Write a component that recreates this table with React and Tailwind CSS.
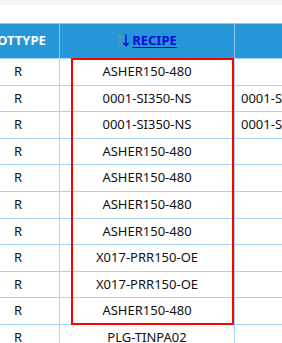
import React from 'react';

const rows = [
  { type: 'R', recipe: 'ASHER150-480', next: '' },
  { type: 'R', recipe: '0001-SI350-NS', next: '0001-SI350-NS' },
  { type: 'R', recipe: '0001-SI350-NS', next: '0001-SI350-NS' },
  { type: 'R', recipe: 'ASHER150-480', next: '' },
  { type: 'R', recipe: 'ASHER150-480', next: '' },
  { type: 'R', recipe: 'ASHER150-480', next: '' },
  { type: 'R', recipe: 'ASHER150-480', next: '' },
  { type: 'R', recipe: 'X017-PRR150-OE', next: '' },
  { type: 'R', recipe: 'X017-PRR150-OE', next: '' },
  { type: 'R', recipe: 'ASHER150-480', next: '' },
  { type: 'R', recipe: 'PLG-TINPA02', next: '' },
];

function SortArrows() {
  return (
    <svg width="12" height="13" viewBox="0 0 12 13" className="inline-block mr-[3px] -mt-[2px] align-middle">
      <g fill="none" strokeWidth="1.3" strokeLinecap="round" strokeLinejoin="round">
        <path d="M3 12V1.5M0.8 3.8L3 1.3L5.2 3.8" stroke="#7d8b98" />
        <path d="M9 1V11.5M6.8 9.2L9 11.7L11.2 9.2" stroke="#0a0ad6" />
      </g>
    </svg>
  );
}

export default function App() {
  return (
    <div
      className="relative w-[282px] h-[343px] overflow-hidden bg-white text-[#111]"
      style={{ fontFamily: '"Noto Sans", "Open Sans", sans-serif' }}
    >
      <div className="h-[5px] bg-[#f4f5f7]" />
      <div className="h-[18px]" />

      {/* table */}
      <div className="-ml-[23px] w-[400px]">
        <div className="flex h-[35px] bg-[#2596d8] border-t border-[#8ec6ee]">
          <div className="w-[83px] flex items-center justify-center border-r border-[#8ec6ee] text-white font-bold text-[13px]">
            LOTTYPE
          </div>
          <div className="w-[175px] flex items-center justify-center border-r border-[#8ec6ee]">
            <a className="font-bold text-[13px] text-[#0a0ad6] underline underline-offset-2 cursor-pointer whitespace-nowrap">
              <SortArrows />RECIPE
            </a>
          </div>
          <div className="flex-1" />
        </div>

        {rows.map((r, i) => (
          <div key={i} className="flex h-[26.6px] border-t border-[#a9d3f7] text-[13px] text-[#111]">
            <div className="w-[83px] flex items-center justify-center border-r border-[#a9d3f7]">
              {r.type}
            </div>
            <div className="w-[175px] flex items-center justify-center border-r border-[#a9d3f7]">
              {r.recipe}
            </div>
            <div className="flex-1 flex items-center pl-[6px] whitespace-nowrap">
              {r.next}
            </div>
          </div>
        ))}
      </div>

      {/* highlight box */}
      <div className="absolute left-[71px] top-[58px] w-[163px] h-[267px] border-2 border-[#ff0000] pointer-events-none" />
    </div>
  );
}
